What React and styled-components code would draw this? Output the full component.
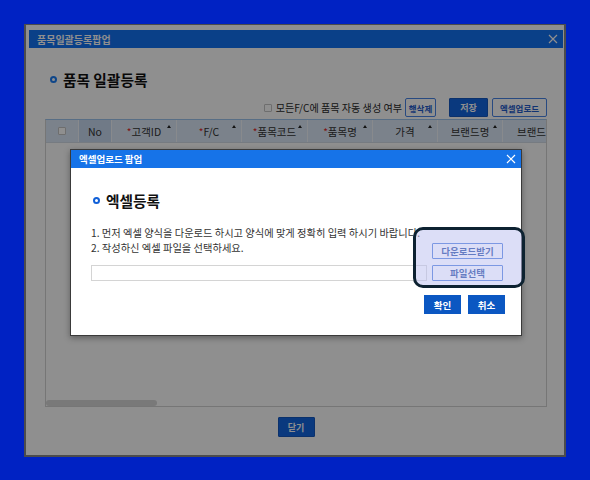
import React from 'react';
import styled, { createGlobalStyle } from 'styled-components';

const GlobalStyle = createGlobalStyle`
	html, body {
		margin: 0;
		padding: 0;
		background: #0022c3;
	}
	body {
		font-family: "Noto Sans CJK KR", "Noto Sans", sans-serif;
		width: 590px;
		height: 480px;
		overflow: hidden;
	}
	#root {
		padding: 24px 0 0 24px;
	}
`;

const columns = [
	{ label: '고객ID', required: true, sort: true, width: 65 },
	{ label: 'F/C', required: true, sort: true, width: 65 },
	{ label: '품목코드', required: true, sort: true, width: 66 },
	{ label: '품목명', required: true, sort: true, width: 65 },
	{ label: '가격', sort: true, width: 65 },
	{ label: '브랜드명', sort: true, width: 65 },
	{ label: '브랜드', width: 58 },
];

function CloseIcon({ color }) {
	return (
		<svg width="10" height="10" viewBox="0 0 10 10">
			<path d="M1 1 L9 9 M9 1 L1 9" stroke={color} strokeWidth="1.2" fill="none" />
		</svg>
	);
}

function App() {
	return (
		<>
			<GlobalStyle />
			<Popup>
				<TitleBar>
					<span>품목일괄등록팝업</span>
					<CloseIcon color="#fff" />
				</TitleBar>
				<Content>
					<Heading>
						<Ring />
						품목 일괄등록
					</Heading>
					<Toolbar>
						<Check />
						<Label>모든F/C에 품목 자동 생성 여부</Label>
						<LineButton>행삭제</LineButton>
						<FillButton $ml={13}>저장</FillButton>
						<LineButton $ml={4} $w={55}>엑셀업로드</LineButton>
					</Toolbar>
					<Grid>
						<HeadRow>
							<HeadCell $w={33}>
								<Check />
							</HeadCell>
							<HeadCell $w={33} $dark>No</HeadCell>
							{columns.map((c) => (
								<HeadCell key={c.label} $w={c.width}>
									{c.required && <Req>*</Req>}
									{c.label}
									{c.sort && <Sort />}
								</HeadCell>
							))}
						</HeadRow>
						<Body>
							<Thumb />
						</Body>
					</Grid>
					<Footer>
						<FillButton $w={37} $h={20}>닫기</FillButton>
					</Footer>
				</Content>

				<Dim />

				<Modal>
					<ModalTitle>
						<span>엑셀업로드 팝업</span>
						<CloseIcon color="#fff" />
					</ModalTitle>
					<ModalBody>
						<Heading $inner>
							<Ring $inner />
							엑셀등록
						</Heading>
						<Guide $mt={15}>1. 먼저 엑셀 양식을 다운로드 하시고 양식에 맞게 정확히 입력 하시기 바랍니다.</Guide>
						<GuideRow>
							<Guide>2. 작성하신 엑셀 파일을 선택하세요.</Guide>
							<FileButton $mt={3}>다운로드받기</FileButton>
						</GuideRow>
						<FileRow>
							<FileInput />
							<FileButton>파일선택</FileButton>
						</FileRow>
						<Actions>
							<ActionButton>확인</ActionButton>
							<ActionButton>취소</ActionButton>
						</Actions>
					</ModalBody>
					<Highlight />
				</Modal>
			</Popup>
		</>
	);
}

const Popup = styled.div`
	position: relative;
	box-sizing: border-box;
	width: 542px;
	height: 433px;
	background: #fff;
	border: 2px solid #4c4c4c;
	border-top-width: 1px;
	padding: 5px 1px 0 3px;
	display: flex;
	flex-direction: column;
`;

const TitleBar = styled.div`
	height: 18px;
	background: #1372f2;
	color: #fff;
	font-size: 10px;
	font-weight: 700;
	display: flex;
	align-items: center;
	justify-content: space-between;
	padding: 0 5px 0 8px;

	svg {
		width: 10px;
		height: 10px;
	}
`;

const Content = styled.div`
	flex: 1;
	display: flex;
	flex-direction: column;
	padding: 21px 16px 0;
`;

const Heading = styled.div`
	display: flex;
	align-items: center;
	gap: 6px;
	height: 20px;
	padding-left: ${(p) => (p.$inner ? 2 : 5)}px;
	font-size: 14.7px;
	font-weight: 700;
	color: #111;
`;

const Ring = styled.span`
	box-sizing: border-box;
	width: 7px;
	height: 7px;
	border: 2px solid ${(p) => (p.$inner ? '#1160d8' : '#1b7df5')};
	border-radius: 50%;
`;

const Toolbar = styled.div`
	display: flex;
	align-items: center;
	justify-content: flex-end;
	margin-top: 9px;
	height: 19px;
`;

const Check = styled.span`
	box-sizing: border-box;
	width: 8px;
	height: 8px;
	background: #fff;
	border: 1px solid #c4c4c4;
	border-radius: 1px;
`;

const Label = styled.span`
	font-size: 10.1px;
	color: #2a2a2a;
	margin: 0 3px 0 4px;
`;

const LineButton = styled.button`
	box-sizing: border-box;
	width: ${(p) => p.$w || 31}px;
	height: 19px;
	margin-left: ${(p) => p.$ml || 0}px;
	padding: 0;
	background: #fff;
	border: 1px solid #4884e6;
	border-radius: 2px;
	color: #1f5ccc;
	font-family: inherit;
	font-size: 8.5px;
	font-weight: 700;
`;

const FillButton = styled.button`
	box-sizing: border-box;
	width: ${(p) => p.$w || 39}px;
	height: ${(p) => p.$h || 19}px;
	margin-left: ${(p) => p.$ml || 0}px;
	padding: 0;
	background: #1366e0;
	border: 1px solid #1558c0;
	border-radius: 1px;
	color: #fff;
	font-family: inherit;
	font-size: 9px;
	font-weight: 700;
`;

const Grid = styled.div`
	box-sizing: border-box;
	margin-top: 2px;
	height: 288px;
	border: 1px solid #d3d3d3;
	border-top-color: #9ec4ee;
	display: flex;
	flex-direction: column;
	overflow: hidden;
`;

const HeadRow = styled.div`
	display: flex;
	height: 22px;
	flex-shrink: 0;
	background: #dce8f8;
	border-bottom: 1px solid #d3dbe6;
`;

const HeadCell = styled.div`
	position: relative;
	flex: 0 0 ${(p) => p.$w}px;
	box-sizing: border-box;
	display: flex;
	align-items: center;
	justify-content: center;
	background: ${(p) => (p.$dark ? '#c8daf0' : 'transparent')};
	border-right: 1px solid #f2f6fb;
	font-size: 10.5px;
	color: #333;
	white-space: nowrap;
`;

const Req = styled.span`
	color: #e02424;
	font-size: 10px;
	line-height: 1;
	margin-top: 2px;
`;

const Sort = styled.span`
	position: absolute;
	top: 5px;
	right: 5px;
	width: 0;
	height: 0;
	border-left: 2px solid transparent;
	border-right: 2px solid transparent;
	border-bottom: 3px solid #222;
`;

const Body = styled.div`
	flex: 1;
	display: flex;
	align-items: flex-end;
	background: #fff;
`;

const Thumb = styled.div`
	width: 111px;
	height: 6px;
	border-radius: 3px;
	background: #d8d8d8;
`;

const Footer = styled.div`
	display: flex;
	justify-content: center;
	margin-top: 10px;
`;

const Dim = styled.div`
	position: absolute;
	inset: 0;
	background: rgba(0, 0, 0, 0.44);
`;

const Modal = styled.div`
	position: absolute;
	left: 44px;
	top: 124px;
	box-sizing: border-box;
	width: 452px;
	height: 187px;
	background: #fff;
	border: 1px solid #3a3a3a;
	box-shadow: 0 2px 6px rgba(0, 0, 0, 0.35);
`;

const ModalTitle = styled.div`
	height: 18px;
	background: #1673e8;
	color: #fff;
	font-size: 9.5px;
	font-weight: 700;
	display: flex;
	align-items: center;
	justify-content: space-between;
	padding: 0 5px 0 8px;

	svg {
		width: 10px;
		height: 10px;
	}
`;

const ModalBody = styled.div`
	display: flex;
	flex-direction: column;
	padding: 22px 16px 0 20px;
`;

const Guide = styled.div`
	margin-top: ${(p) => p.$mt || 0}px;
	font-size: 10.25px;
	line-height: 15px;
	color: #333;
	white-space: nowrap;
`;

const GuideRow = styled.div`
	display: flex;
	justify-content: space-between;
	align-items: flex-start;
	padding-right: 2px;
`;

const FileRow = styled.div`
	display: flex;
	align-items: flex-start;
	gap: 5px;
	margin-top: 6px;
	padding-right: 2px;
`;

const FileInput = styled.div`
	flex: 1;
	box-sizing: border-box;
	height: 16px;
	border: 1px solid #d4d4d4;
	background: #fff;
`;

const FileButton = styled.button`
	box-sizing: border-box;
	width: 71px;
	height: 16px;
	margin-top: ${(p) => p.$mt || 0}px;
	padding: 0;
	background: #fff;
	border: 1px solid #3f72d6;
	border-radius: 1px;
	color: #0f3a94;
	font-family: inherit;
	font-size: 9.5px;
	font-weight: 700;
`;

const Actions = styled.div`
	display: flex;
	justify-content: flex-end;
	gap: 7px;
	margin-top: 14px;
`;

const ActionButton = styled.button`
	box-sizing: border-box;
	width: 37px;
	height: 19px;
	padding: 0;
	background: #0b57c2;
	border: none;
	color: #fff;
	font-family: inherit;
	font-size: 9.5px;
	font-weight: 700;
`;

const Highlight = styled.div`
	position: absolute;
	left: 342px;
	top: 77px;
	box-sizing: border-box;
	width: 112px;
	height: 61px;
	border: 3px solid #0d2231;
	border-radius: 10px;
	background: rgba(185, 190, 240, 0.5);
`;

export default App;
